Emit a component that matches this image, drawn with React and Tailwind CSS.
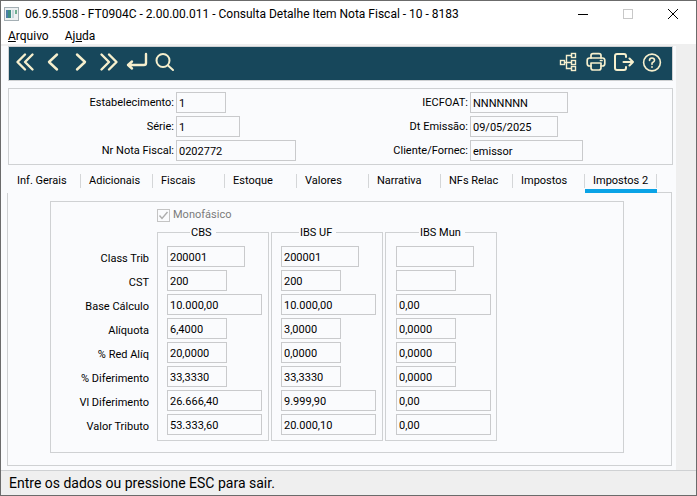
import React from "react";

const iconProps = {
  width: 20,
  height: 20,
  viewBox: "0 0 20 20",
  fill: "none",
  stroke: "#f6efcd",
  strokeWidth: 2.4,
  strokeLinecap: "round",
  strokeLinejoin: "round",
  "aria-hidden": true,
};

const FirstIcon = () => (
  <svg {...iconProps}>
    <path d="M10 2.5L2.5 10L10 17.5M17.5 2.5L10 10L17.5 17.5" />
  </svg>
);
const PreviousIcon = () => (
  <svg {...iconProps}>
    <path d="M14 2.5L6 10L14 17.5" />
  </svg>
);
const NextIcon = () => (
  <svg {...iconProps}>
    <path d="M6 2.5L14 10L6 17.5" />
  </svg>
);
const LastIcon = () => (
  <svg {...iconProps}>
    <path d="M2.5 2.5L10 10L2.5 17.5M10 2.5L17.5 10L10 17.5" />
  </svg>
);
const EnterIcon = () => (
  <svg {...iconProps} width={22} viewBox="0 0 22 20">
    <path d="M20 2V11Q20 13 18 13H2M6 9.500L2 13L6 16.500" />
  </svg>
);
const SearchIcon = () => (
  <svg {...iconProps} strokeWidth={2}>
    <circle cx="8" cy="8.500" r="6.500" />
    <path d="M13 13.500L18 18" />
  </svg>
);
const TreeIcon = () => (
  <svg {...iconProps} strokeWidth={1.4} strokeLinejoin="miter">
    <rect x="2.5" y="8.5" width="4" height="4" />
    <rect x="13.5" y="1.5" width="4" height="4" />
    <rect x="13.5" y="8.5" width="4" height="4" />
    <rect x="13.5" y="14.5" width="4" height="4" />
    <path d="M6.5 10.5H13.5M13.5 3.5H8.5V16.5H13.5" />
  </svg>
);
const PrinterIcon = () => (
  <svg {...iconProps} strokeWidth={1.7}>
    <path d="M5 6V3.500Q5 1.700 7 1.700H13Q15 1.700 15 3.500V6" />
    <path d="M5 14H3.500Q1.200 14 1.200 11.500V8.500Q1.200 6 3.500 6H16.500Q18.800 6 18.800 8.500V11.500Q18.800 14 16.500 14H15" />
    <path d="M5 11H15V15.500Q15 18 13 18H7Q5 18 5 15.500Z" />
    <path d="M14.500 8.500H16" />
  </svg>
);
const ExitIcon = () => (
  <svg {...iconProps} strokeWidth={2}>
    <path d="M12 5V4Q12 2 10 2H3Q1 2 1 4V16Q1 18 3 18H10Q12 18 12 16V15" />
    <path d="M9.500 10H19M15.500 6.500L19 10L15.500 13.500" />
  </svg>
);
const HelpIcon = () => (
  <svg {...iconProps} strokeWidth={1.6}>
    <circle cx="10" cy="10.500" r="8.400" />
    <path d="M7.500 8.500Q7.500 6 10 6T12.500 8.300Q12.500 9.500 11 10.300T10 12.300" />
    <path d="M10 15V15.100" strokeWidth={1.8} />
  </svg>
);

const navigation = [
  ["Primeiro", FirstIcon],
  ["Anterior", PreviousIcon],
  ["Próximo", NextIcon],
  ["Último", LastIcon],
  ["Vá para", EnterIcon],
  ["Pesquisar", SearchIcon],
];
const utilities = [
  ["Consultas relacionadas", TreeIcon],
  ["Imprimir", PrinterIcon],
  ["Sair", ExitIcon],
  ["Ajuda", HelpIcon],
];

const documentFields = [
  { id: "estabelecimento", label: "Estabelecimento:", value: "1", width: "w-[50px]" },
  { id: "serie", label: "Série:", value: "1", width: "w-[64px]" },
  { id: "nota", label: "Nr Nota Fiscal:", value: "0202772", width: "w-[120px]" },
];
const issuerFields = [
  { id: "iecfoat", label: "IECFOAT:", value: "NNNNNNN", width: "w-[98px]" },
  { id: "emissao", label: "Dt Emissão:", value: "09/05/2025", width: "w-[88px]" },
  { id: "cliente", label: "Cliente/Fornec:", value: "emissor", width: "w-[113px]" },
];

const tabs = ["Inf. Gerais", "Adicionais", "Fiscais", "Estoque", "Valores", "Narrativa", "NFs Relac", "Impostos", "Impostos 2"];

const taxRows = [
  { label: "Class Trib", width: "w-[78px]" },
  { label: "CST", width: "w-[60px]" },
  { label: "Base Cálculo", width: "w-[95px]" },
  { label: "Alíquota", width: "w-[60px]" },
  { label: "% Red Alíq", width: "w-[60px]" },
  { label: "% Diferimento", width: "w-[60px]" },
  { label: "Vl Diferimento", width: "w-[95px]" },
  { label: "Valor Tributo", width: "w-[95px]" },
];
const taxGroups = [
  { name: "CBS", inset: "pl-[9px]", legend: "ml-[23px]", values: ["200001", "200", "10.000,00", "6,4000", "20,0000", "33,3330", "26.666,40", "53.333,60"] },
  { name: "IBS UF", inset: "pl-[9px]", legend: "ml-[18px]", values: ["200001", "200", "10.000,00", "3,0000", "0,0000", "33,3330", "9.999,90", "20.000,10"] },
  { name: "IBS Mun", inset: "pl-[10px]", legend: "ml-[23px]", values: ["", "", "0,00", "0,0000", "0,0000", "0,0000", "0,00", "0,00"] },
];

function ToolButton({ label, Icon }) {
  return (
    <button type="button" aria-label={label} className="flex h-7 w-7 items-center justify-center">
      <Icon />
    </button>
  );
}

function ValueBox({ width, ...props }) {
  return (
    <input
      readOnly
      className={`h-[21px] border border-[#c9cacc] bg-[#fafbfd] px-[2px] pt-[2px] text-[11px] text-black outline-none ${width}`}
      {...props}
    />
  );
}

function FieldColumn({ fields }) {
  return (
    <div className="flex flex-col gap-[3px]">
      {fields.map((f) => (
        <div key={f.id} className="flex items-start gap-[2px]">
          <label htmlFor={f.id} className="w-[165px] text-right leading-[21px]">
            {f.label}
          </label>
          <ValueBox id={f.id} width={f.width} defaultValue={f.value} />
        </div>
      ))}
    </div>
  );
}

export default function App() {
  return (
    <div className="flex min-h-screen flex-col border border-[#6b6b6b] bg-[#efefef] font-[Roboto,sans-serif] text-[11px] text-black">
      <header className="bg-white">
        <div className="flex h-[25px] items-center">
          <svg className="ml-[3px] shrink-0" width="15" height="14" viewBox="0 0 15 14" aria-hidden="true">
            <rect x="0.5" y="0.5" width="14" height="13" fill="#eef1f2" stroke="#a4afb4" />
            <rect x="2" y="3" width="5" height="8" fill="#3f8f83" />
            <rect x="2" y="3" width="2" height="8" fill="#4b7fa8" />
            <rect x="8" y="3" width="2" height="8" fill="#c5d6dc" />
            <rect x="11" y="3" width="2" height="4" fill="#6faf91" />
          </svg>
          <h1 className="ml-[6px] grow whitespace-nowrap text-[12px]">
            06.9.5508 - FT0904C - 2.00.00.011 - Consulta Detalhe Item Nota Fiscal - 10 - 8183
          </h1>
          <div className="flex pr-px">
            <button type="button" aria-label="Minimizar" className="flex h-6 w-[45px] items-center justify-center">
              <svg width="10" height="10" viewBox="0 0 10 10" stroke="#000">
                <path d="M0 5.500H10" />
              </svg>
            </button>
            <button type="button" aria-label="Maximizar" disabled className="flex h-6 w-[45px] items-center justify-center">
              <svg width="10" height="10" viewBox="0 0 10 10" fill="none" stroke="#c8c8c8">
                <rect x="0.500" y="0.500" width="9" height="9" />
              </svg>
            </button>
            <button type="button" aria-label="Fechar" className="flex h-6 w-[45px] items-center justify-center">
              <svg width="10" height="10" viewBox="0 0 10 10" stroke="#000">
                <path d="M0 0L10 10M10 0L0 10" />
              </svg>
            </button>
          </div>
        </div>
        <nav className="flex h-[18px] items-end gap-4 pl-[7px] text-[12px] leading-4">
          <button type="button"><span className="underline">A</span>rquivo</button>
          <button type="button">Aj<span className="underline">u</span>da</button>
        </nav>
      </header>

      <main className="mr-5 mt-[2px] flex grow flex-col bg-[#fafbfd] pb-1 pl-[6px] pr-[3px]">
        <div role="toolbar" className="ml-px flex h-[35px] items-center justify-between border border-[#cfd1d3] bg-[#17475b] pb-[3px] pl-[2px] pr-[6px]">
          <div className="flex">
            {navigation.map(([label, Icon]) => (
              <ToolButton key={label} label={label} Icon={Icon} />
            ))}
          </div>
          <div className="flex">
            {utilities.map(([label, Icon]) => (
              <ToolButton key={label} label={label} Icon={Icon} />
            ))}
          </div>
        </div>

        <section className="ml-px mt-[7px] grid grid-cols-[294px_1fr] border border-[#cfd1d3] py-[3px]">
          <FieldColumn fields={documentFields} />
          <FieldColumn fields={issuerFields} />
        </section>

        <div className="mr-px mt-[6px] flex items-end border-l border-transparent">
          <div role="tablist" className="flex pl-px">
            {tabs.map((tab, i) => {
              const selected = i === tabs.length - 1;
              return (
                <button
                  key={tab}
                  type="button"
                  role="tab"
                  aria-selected={selected}
                  className={`flex h-[22px] w-[72px] items-end whitespace-nowrap border-b-4 pb-px ${selected ? "border-[#0aa3e6]" : "border-transparent"}`}
                >
                  <span className="h-[14px] w-full border-r border-[#d4d6d8] pl-2 text-left leading-[14px]">{tab}</span>
                </button>
              );
            })}
          </div>
          <span className="h-px grow bg-[#cfd1d3]" />
        </div>

        <div role="tabpanel" className="mr-px grow border border-t-0 border-[#cfd1d3] pb-[11px] pl-[42px] pr-[47px] pt-2">
          <section className="flex h-full border border-[#cfd1d3] pb-[11px]">
            <div className="flex w-[98px] flex-col gap-[3px] pt-[46px] text-right">
              {taxRows.map((row, i) => (
                <label key={row.label} htmlFor={`CBS-${i}`} className="h-[21px] leading-[21px]">{row.label}</label>
              ))}
            </div>
            <div className="pl-2 pt-[5px]">
              <label className="flex h-4 items-center gap-[3px] text-[#7b7b7b]">
                <span className="grid">
                  <input type="checkbox" defaultChecked disabled className="col-start-1 row-start-1 h-[13px] w-[13px] appearance-none border border-[#c4c4c4]" />
                  <svg className="col-start-1 row-start-1" width="13" height="13" viewBox="0 0 13 13" fill="none" aria-hidden="true">
                    <path d="M2.500 6.500L5 9.500L10.500 3" stroke="#adadad" strokeWidth="1.400" />
                  </svg>
                </span>
                Monofásico
              </label>
              <div className="flex gap-[2px] pt-px">
                {taxGroups.map((group) => (
                  <fieldset key={group.name} className={`w-[112px] border border-[#cfd1d3] pb-[5px] ${group.inset}`}>
                    <legend className={`h-4 pl-px pr-1 leading-[18px] ${group.legend}`}>{group.name}</legend>
                    <div className="flex flex-col gap-[3px] pt-[6px]">
                      {group.values.map((value, i) => (
                        <ValueBox
                          key={i}
                          id={`${group.name}-${i}`}
                          aria-label={`${taxRows[i].label} ${group.name}`}
                          width={taxRows[i].width}
                          defaultValue={value}
                        />
                      ))}
                    </div>
                  </fieldset>
                ))}
              </div>
            </div>
          </section>
        </div>
      </main>

      <footer className="h-[25px] border-t border-[#cfd1d3] pl-2 text-[14px] leading-6">
        Entre os dados ou pressione ESC para sair.
      </footer>
    </div>
  );
}
